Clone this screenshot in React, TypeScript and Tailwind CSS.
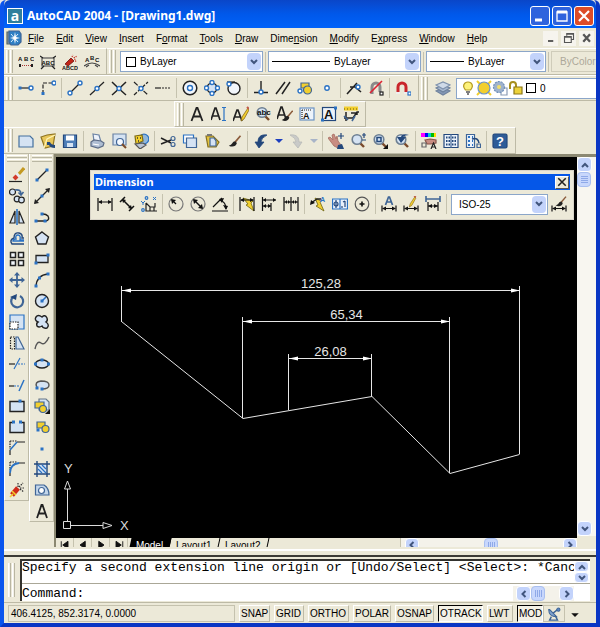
import { useState } from 'react';
import type { ReactNode } from 'react';
import clsx from 'clsx';

type Tool = { name: string; art: ReactNode } | 'sep';

const NAVY = '#23487c';
const STEEL = '#3f6596';
const BLUE = '#2a72c4';
const PALE = '#d5e3f3';
const YELLOW = '#f2cf2e';

function Icon({ children, className = 'h-4 w-4' }: { children: ReactNode; className?: string }) {
  return (
    <svg viewBox="0 0 16 16" className={clsx('shrink-0', className)} fill="none" stroke="#222" strokeWidth="1.2" aria-hidden="true">
      {children}
    </svg>
  );
}

// blue grip point used by most of the draw and snap icons
const Dot = ({ x, y }: { x: number; y: number }) => (
  <rect x={x - 1.5} y={y - 1.5} width="3" height="3" fill={BLUE} stroke="none" />
);
const Ring = ({ x, y, r = 2 }: { x: number; y: number; r?: number }) => (
  <circle cx={x} cy={y} r={r} fill="#fff" stroke={BLUE} strokeWidth="1.4" />
);
const Letters = ({ t, x, y, size, fill = '#111' }: { t: string; x: number; y: number; size: number; fill?: string }) => (
  <text x={x} y={y} fontSize={size} fontFamily="Liberation Sans, sans-serif" fontWeight="bold" fill={fill} stroke="none">{t}</text>
);
const Pencil = () => (
  <g>
    <path d="M15 2 9 11l-1 4 3-2 5-9z" fill={YELLOW} stroke="#8a6a17" strokeWidth=".8" />
    <path d="m14 1 2 2" stroke="#c05a4a" strokeWidth="2" />
  </g>
);
const Brush = () => (
  <g>
    <path d="m15 2-6 7" stroke="#8a5a3a" strokeWidth="1.8" />
    <path d="M9 8c-3 0-3 4-7 5 4 2 8 1 9-3z" fill="#222" stroke="none" />
  </g>
);
const DimBar = ({ y = 13 }: { y?: number }) => (
  <g stroke="#111">
    <path d={`M1 ${y - 3}v6M15 ${y - 3}v6M2 ${y}h12`} />
    <path d={`M1 ${y}l4-2v4zM15 ${y}l-4-2v4z`} fill="#111" stroke="none" />
  </g>
);
const Lens = ({ children }: { children?: ReactNode }) => (
  <g>
    <path d="m10 10 4 4" stroke="#7a4a2a" strokeWidth="2.4" />
    <circle cx="7" cy="6.500" r="4.800" fill={PALE} stroke="#6d7f92" strokeWidth="1.6" />
    {children}
  </g>
);

const express: Tool[] = [
  { name: 'Arc aligned text', art: <><Letters t="A" x={0} y={7} size={6} /><Letters t="B" x={6} y={7} size={6} /><Letters t="C" x={12} y={7} size={6} /><path d="M2 11.500h12" stroke="#a33" strokeDasharray="1 1" /><path d="M1 11.500h2m10 0h2" strokeWidth="3" /></> },
  { name: 'Text fit', art: <><rect x="2" y="4" width="12" height="8" stroke="#555" /><path d="m0 2 3 2m13-2-3 2M1 15l3-3m11 3-3-3" /><Letters t="ABC" x={1.5} y={10.5} size={6} /></> },
  { name: 'Explode text', art: <><path d="m3 10 6-6 3 3-6 5z" fill="#c22518" stroke="#6a1010" strokeWidth=".8" /><path d="m10 3 1-2m1 3 3-2m-2 5h2m-3-4 2 5" stroke="#c22518" strokeDasharray="1 1" /><Letters t="ABCD" x={0} y={16} size={5.5} /></> },
  { name: 'Remote text', art: <><Letters t="A" x={1} y={8} size={6} /><Letters t="B" x={6} y={6} size={6} /><Letters t="C" x={11} y={8} size={6} /><path d="M0 12q8-6 16 0M2 13l3-2m9 2-3-2" stroke="#444" /></> },
];

const snaps: Tool[] = [
  { name: 'Temporary track point', art: <><path d="M2 8h10" /><Dot x={2} y={8} /><Ring x={13} y={8} /></> },
  { name: 'Snap from', art: <><path d="M3 14V3h9" strokeDasharray="4 1.5" /><Dot x={3} y={13.5} /><Ring x={14} y={3} /></> },
  'sep',
  { name: 'Snap to endpoint', art: <><path d="M3 13 13 3" /><Ring x={3} y={13} /><Ring x={13} y={3} /></> },
  { name: 'Snap to midpoint', art: <><path d="M1 15 15 2" /><Ring x={8} y={8.5} /></> },
  { name: 'Snap to intersection', art: <><path d="M1 2q7 7 14 13M1 15Q8 9 15 2" strokeWidth="1.5" /><Ring x={8} y={8.5} /></> },
  { name: 'Snap to apparent intersection', art: <><path d="m1 2 14 13" strokeDasharray="5 1.5" /><path d="M1 15 15 2" strokeDasharray="4 1.5" /><Ring x={8} y={8.5} /></> },
  { name: 'Snap to extension', art: <><path d="M0 8h6" /><path d="M7 8h9" strokeDasharray="2 1" /></> },
  'sep',
  { name: 'Snap to center', art: <><circle cx="8" cy="8" r="6.800" fill="#f2f6fb" strokeWidth="1.5" /><Ring x={8} y={8} r={2.5} /></> },
  { name: 'Snap to quadrant', art: <><circle cx="8" cy="8" r="5" fill={PALE} /><Ring x={8} y={2.5} /><Ring x={13.5} y={8} /><Ring x={8} y={13.5} /><Ring x={2.5} y={8} /></> },
  { name: 'Snap to tangent', art: <><path d="M1 2h8" /><circle cx="8" cy="8.500" r="6" fill="#f2f6fb" strokeWidth="1.4" /><Ring x={3} y={4} /></> },
  'sep',
  { name: 'Snap to perpendicular', art: <><path d="M8 1v11M1 12.500h14" strokeWidth="1.4" /><Ring x={8} y={12} /></> },
  { name: 'Snap to parallel', art: <path d="M1 14 10 2M7 14l8-12" strokeWidth="1.5" /> },
  { name: 'Snap to insert', art: <><path d="M4 3h8v5H4z" fill={YELLOW} stroke={STEEL} /><circle cx="10.500" cy="10" r="4" fill={YELLOW} stroke={STEEL} /><Ring x={3} y={11} /></> },
  { name: 'Snap to node', art: <Ring x={8} y={8} r={2.2} /> },
  'sep',
  { name: 'Snap to nearest', art: <><path d="M1 14 11 3M4 7h5l6 5" strokeWidth="1.6" /><Ring x={12} y={7} /></> },
  { name: 'Snap to none', art: <><path d="M4 14V7a4 4 0 0 1 8 0v5" stroke="#8a8a8a" strokeWidth="3" /><path d="M2 13 14 1" stroke="#d23" strokeWidth="1.6" /><rect x="12" y="12" width="3" height="3" fill="#fff" /></> },
  'sep',
  { name: 'Object snap settings', art: <><path d="M3 14V7a4 4 0 0 1 8 0v7" stroke="#c9252b" strokeWidth="3" /><path d="M1 13h4m4 0h4" stroke="#eee" strokeWidth="2" /><rect x="13" y="12" width="3" height="3" fill="#fff" stroke={BLUE} /></> },
];

const textTools: Tool[] = [
  { name: 'Multiline text', art: <path d="m2.500 15 5-13h1l5 13M4.500 10.500h7" strokeWidth="1.8" /> },
  { name: 'Single line text', art: <><path d="m0 14 4-12h1l4 12M2 10h5.500" strokeWidth="1.700" /><path d="M13 2v12M11 1.500h4M11 14.500h4" stroke={BLUE} /></> },
  { name: 'Edit text', art: <><path d="m0 15 4-11h1l4 11M2 11h5.500" strokeWidth="1.700" /><Pencil /></> },
  { name: 'Find and replace', art: <><Lens /><Letters t="abc" x={2} y={9} size={8} /></> },
  { name: 'Text style', art: <><path d="m0 13 4-12h1l4 12M2 9h5.500" strokeWidth="1.700" /><g transform="translate(3 3) scale(.85)"><Brush /></g></> },
  { name: 'Scale text', art: <><rect x="1" y="2" width="14" height="12" fill="#edf3fa" stroke="#6b93c4" /><path d="M3 4h9M3 4v9" stroke="#222" strokeDasharray="1 1" /><Letters t="A" x={4} y={13} size={9} /></> },
  { name: 'Justify text', art: <><rect x="1.500" y="1.500" width="13" height="13" fill="#edf3fa" stroke={NAVY} /><Letters t="A" x={3} y={13} size={13} /><Dot x={1.5} y={14} /><Dot x={14.5} y={2} /></> },
  { name: 'Convert distance', art: <><path d="M1 2.500h14" stroke={YELLOW} strokeWidth="4" /><path d="M1 3h14" stroke="#6a5a10" strokeDasharray="1 2" /><path d="M3 6v9M1 12h9l4-6h2M8 7h6v2" strokeWidth="1.500" /><path d="m1 10 4 4M9 15l3-5" stroke={STEEL} strokeWidth="1.600" /></> },
];

const standard: Tool[] = [
  { name: 'New', art: <path d="M1 3h11l3 3v8H1z" fill={PALE} stroke="#44709e" /> },
  { name: 'Open', art: <><path d="m1 4 6-2 8-1-2 12-8 2z" fill="#e7c65a" stroke="#8f7420" /><path d="m4 15 3-9 8-4" stroke="#fff3b5" /><path d="M7 9h3q1 3 5 3v3q-5 0-6-3H7z" fill={NAVY} stroke="none" /></> },
  { name: 'Save', art: <><path d="M1.500 2h13v12.500h-13z" fill="#4f7fb8" stroke={NAVY} /><path d="M4 2.500h8v5H4z" fill="#fff" stroke="none" /><path d="M5 10h6v4H5z" fill={PALE} stroke="none" /></> },
  'sep',
  { name: 'Plot', art: <><path d="m4 1 6 1 2 7-7-1z" fill="#eef3fb" stroke="#6b83a4" /><path d="m2 9 3-2 7 1 3 2-1 3-5 2-7-2z" fill="#aebdd2" stroke="#5c6c86" /><path d="m4 11 6 1" stroke="#fff" /></> },
  { name: 'Plot preview', art: <><path d="M2 1h13v11H2z" fill={PALE} stroke="#6b83a4" /><circle cx="9" cy="9" r="3.500" fill="#f5f9ff" stroke={STEEL} /><path d="m11 11 4 4" stroke="#7a4a2a" strokeWidth="2" /></> },
  { name: 'Publish', art: <><circle cx="11" cy="6" r="4.800" fill="#8fb7dc" stroke={BLUE} /><path d="m2 3 7-1 1 6-7 3z" fill={YELLOW} stroke="#7d6a14" /><path d="M4 5h1m2 0h1M5 8h1" stroke="#333" strokeWidth="1.500" /><path d="m2 11 8-1 3 2-6 4z" fill="#b9c4d4" stroke="#555" /></> },
  'sep',
  { name: 'Cut', art: <><path d="m1 5 10 5M1 11l10-4" strokeWidth="1.500" /><circle cx="13" cy="5.500" r="2" stroke={STEEL} /><circle cx="13" cy="11.500" r="2" stroke={STEEL} /></> },
  { name: 'Copy', art: <><path d="M1.500 2h10v8h-10z" fill="#fff" stroke={BLUE} /><path d="M4.500 5h10v9.500h-10z" fill={PALE} stroke={STEEL} /></> },
  { name: 'Paste', art: <><path d="M2 3h7l6 6-3 5H4z" fill="#e5c33d" stroke="#857021" /><path d="M6 5h4l2 3v5H6z" fill={PALE} stroke={STEEL} /><path d="M3 2h5" stroke="#777" strokeWidth="2" /></> },
  { name: 'Match properties', art: <g transform="translate(1 1) scale(.9)"><Brush /></g> },
  'sep',
  { name: 'Undo', art: <path d="M14 2C7 1 5 5 5 9H2l4 6 5-6H8q0-4 6-7z" fill={NAVY} stroke={NAVY} strokeWidth=".8" /> },
  { name: 'Undo list', art: <path d="M4 6h8l-4 4z" fill="#1d3fbf" stroke="none" /> },
  { name: 'Redo', art: <path d="M2 2c7-1 9 3 9 7h3l-4 6-5-6h3Q8 5 2 2z" fill="#c9cac8" stroke="#b8b9b6" strokeWidth=".8" /> },
  { name: 'Redo list', art: <path d="M4 6h8l-4 4z" fill="#a8b4c8" stroke="none" /> },
  'sep',
  { name: 'Pan', art: <><path d="m0 5 2-1 3 3-1-5 2-1 2 5 1-3 1 5 3 4-3 3-4-2z" fill="#c98d82" stroke="#a56c60" strokeWidth=".8" /><path d="m10 12 4-1 2 5H9z" fill={NAVY} stroke="none" /><path d="M13 0v6m-3-3h6" stroke={NAVY} /></> },
  { name: 'Zoom realtime', art: <><Lens /><path d="M14 0v5m-2-3h4m-4 5h4" stroke={NAVY} /></> },
  { name: 'Zoom window', art: <><Lens><path d="M5 4.500h4v4H5z" stroke={NAVY} strokeWidth="1.500" /></Lens><path d="M16 11v5h-5z" fill="#111" stroke="none" /></> },
  { name: 'Zoom previous', art: <><Lens /><path d="M15 2Q8 0 7 4H3l4 6 5-6H9q2-2 6-2z" fill={NAVY} stroke="none" /></> },
  'sep',
  { name: 'Properties', art: <><path d="M0 2h4" stroke="#f0f" strokeWidth="4" /><path d="M4 2h3" stroke="#00f" strokeWidth="4" /><path d="M7 2h3" stroke="#0cc" strokeWidth="4" /><path d="M10 2h3" stroke="#0b0" strokeWidth="4" /><path d="M13 2h2" stroke="#fd0" strokeWidth="4" /><path d="m4 7 5-1 6 1v3l-5 1H6z" fill="#c98d82" stroke="#875349" /><path d="m10 16 2.500-6 2.500 6M11 14h3" /><path d="M1 10h4v4H1z" stroke="#666" /></> },
  { name: 'DesignCenter', art: <><path d="M1 1.500h14v13H1z" fill="#edf3fa" stroke={NAVY} /><path d="M8 1v14" stroke={STEEL} /><path d="M3 4.500h4m2 0h4M3 8h4m2 0h4M3 11.500h4m2 0h4" stroke={NAVY} strokeWidth="2" strokeDasharray="1.500 1" /></> },
  { name: 'Tool palettes', art: <><path d="M1.500 1.500h8v13h-8z" fill="#edf3fa" stroke={STEEL} /><path d="M3 4h2m2 0h1M3 8h2m2 0h1m-5 4h2m2 0h1" stroke={BLUE} strokeWidth="2" /><path d="M7 6q6-2 7 4" stroke={NAVY} strokeWidth="1.500" /><path d="M12 11h3.500v3.500H12z" stroke={STEEL} /></> },
  'sep',
  { name: 'Help', art: <><rect x="1" y="1" width="14" height="14" rx="1.500" fill="#2e5c98" stroke={NAVY} /><Letters t="?" x={4} y={13} size={13} fill="#fff" /></> },
];

const modify: Tool[] = [
  { name: 'Erase', art: <><path d="M0 14.500h13" /><path d="m15 1-6 7" stroke="#c49a22" strokeWidth="3" /><path d="m10 7-2 2" stroke="#e8ecf2" strokeWidth="4" /><path d="m8 9-3 3" stroke="#d23a2a" strokeWidth="4" /></> },
  { name: 'Copy object', art: <><circle cx="3.500" cy="4" r="3" fill={PALE} /><circle cx="8" cy="11" r="2.800" fill={PALE} /><circle cx="12.500" cy="12" r="2.800" fill={PALE} /><path d="M6 2q6-1 6 4m-2.500-1.500L12 7l2.500-3" stroke={STEEL} strokeWidth="1.600" /></> },
  { name: 'Mirror', art: <><path d="M6 2v12H1zM10 2v12h5z" fill={PALE} /><path d="M8 0v16" stroke={BLUE} strokeWidth="1.600" /></> },
  { name: 'Offset', art: <><path d="M15 14H3q-3-4 2-6 0-6 5-5 4 1 3 5h2" stroke={NAVY} strokeWidth="1.400" /><path d="M15 11H4q0-2 3-2-1-4 2-4t2 5h4" stroke={BLUE} strokeWidth="1.400" /></> },
  { name: 'Array', art: <path d="M1.500 1.500h5v5h-5zm8 0h5v5h-5zm-8 8h5v5h-5zm8 0h5v5h-5z" fill="#f2f6fb" strokeWidth="1.500" /> },
  { name: 'Move', art: <><path d="M8 1v14M1 8h14" stroke={STEEL} strokeWidth="1.800" /><path d="m8 0 3 3.500H5zm0 16 3-3.500H5zM0 8l3.500-3v6zm16 0-3.500-3v6z" fill={STEEL} stroke="none" /></> },
  { name: 'Rotate', art: <><path d="M4 4a6 6 0 1 0 7-1" stroke={STEEL} strokeWidth="2.200" /><path d="m1 4 7-3-1 6z" fill={NAVY} stroke="none" /></> },
  { name: 'Scale', art: <><path d="M1 1h14v14H1z" fill={PALE} stroke={BLUE} /><path d="M1 8h8v7H1z" fill="#fff" strokeDasharray="1.500 1" /></> },
  { name: 'Stretch', art: <><path d="M1.500 2h4v12h-4z" strokeDasharray="1.500 1" /><path d="M7 2h2l6 12H7z" fill={PALE} stroke={STEEL} /></> },
  { name: 'Trim', art: <><path d="M0 8h6" /><path d="m5 13 6-11" stroke={BLUE} /><path d="M9 8h7" stroke={BLUE} strokeDasharray="2 1" /></> },
  { name: 'Extend', art: <><path d="M0 9h5" /><path d="M5 9h6" stroke={BLUE} strokeDasharray="2 1" /><path d="m10 14 5-11" stroke={BLUE} strokeWidth="1.500" /></> },
  { name: 'Break at point', art: <><path d="M1 3.500h14v10H1z" fill={PALE} strokeWidth="1.400" /><Dot x={11} y={3} /></> },
  { name: 'Break', art: <><path d="M4 3.500H1v10h14v-10h-3" fill={PALE} strokeWidth="1.400" /><Dot x={4.5} y={3} /><Dot x={11.5} y={3} /></> },
  { name: 'Chamfer', art: <><path d="M1 1h7M1 1v8" strokeDasharray="1.500 1" /><path d="M1 15v-5m7-8h8" /><path d="m1 10 7-8" stroke={BLUE} strokeWidth="1.500" /></> },
  { name: 'Fillet', art: <><path d="M1 1h7M1 1v8" strokeDasharray="1.500 1" /><path d="M1 15v-3m9-10h6" /><path d="M1 12q0-9 9-10" stroke={BLUE} strokeWidth="1.800" /></> },
  { name: 'Explode', art: <><path d="m3 13 6-7" stroke="#cf2a1b" strokeWidth="5" /><path d="m3 9 4 4M1 15l3-3" stroke={YELLOW} strokeWidth="1.600" /><path d="M9 5V1m1 4 4-4m-3 5h4m-4 1 4 3" stroke="#333" strokeDasharray="1.500 1" /></> },
];

const draw: Tool[] = [
  { name: 'Line', art: <><path d="M3 13 13 3" /><Dot x={3} y={13} /><Dot x={13} y={3} /></> },
  { name: 'Construction line', art: <><path d="M1 15 15 1" /><path d="m0 16 1-5 4 4zM16 0l-1 5-4-4z" fill="#222" stroke="none" /><Dot x={8} y={8} /></> },
  { name: 'Polyline', art: <><path d="M2 12h10q4-1 2-5-2-2-5-2" strokeWidth="1.400" /><Dot x={2} y={12} /><Dot x={11} y={12} /><Dot x={8} y={5} /></> },
  { name: 'Polygon', art: <path d="m8 2 6.500 5-2.500 7H4L1.500 7z" fill={PALE} strokeWidth="1.400" /> },
  { name: 'Rectangle', art: <><path d="M2 4.500h12v7H2z" fill={PALE} strokeWidth="1.300" /><Dot x={2} y={12} /><Dot x={14} y={4} /></> },
  { name: 'Arc', art: <><path d="M2 14Q3 3 14 2" strokeWidth="1.300" /><Dot x={2} y={14} /><Dot x={5.5} y={6} /><Dot x={14} y={2} /></> },
  { name: 'Circle', art: <><circle cx="8" cy="8" r="6.500" fill={PALE} strokeWidth="1.400" /><path d="m8 8 4-4" stroke={BLUE} strokeWidth="1.600" /><Dot x={8} y={8} /></> },
  { name: 'Revision cloud', art: <path d="M4 8Q0 6 2 3t6 0q3-3 5 1 1 3-1 4 4 3 1 6-4 1-5-2-3 2-5 0-1-3 1-4z" fill={PALE} strokeWidth="1.400" /> },
  { name: 'Spline', art: <path d="M1 14q2-9 6-6t8-6" stroke="#555" strokeWidth="1.400" /> },
  { name: 'Ellipse', art: <><ellipse cx="8" cy="8" rx="6.500" ry="4" fill={PALE} strokeWidth="1.400" /><Dot x={8} y={4} /><Dot x={1.5} y={8} /><Dot x={14.5} y={8} /></> },
  { name: 'Ellipse arc', art: <><path d="M3 10Q0 5 7 4q8 0 8 4t-7 4" fill={PALE} stroke="#555" strokeWidth="1.400" /><Dot x={3} y={11} /><Dot x={8} y={12} /></> },
  { name: 'Insert block', art: <><path d="M5 1h7l3 3v8H5z" fill={PALE} stroke="#678" /><path d="M1 4h9v6H1z" fill={YELLOW} stroke={STEEL} /><circle cx="9" cy="11" r="3.500" fill={YELLOW} stroke={STEEL} /><path d="M16 11v5h-5z" fill="#111" stroke="none" /></> },
  { name: 'Make block', art: <><path d="M3 3h8v6H3z" fill={YELLOW} stroke={STEEL} /><circle cx="11.500" cy="10" r="3.500" fill={YELLOW} stroke={STEEL} /><Dot x={4} y={11} /></> },
  { name: 'Point', art: <Dot x={8} y={9} /> },
  { name: 'Hatch', art: <><path d="M3 3h10v10H3z" fill={PALE} stroke="none" /><path d="M3 0v16M13 0v16M0 3h16M0 13h16" stroke={NAVY} strokeWidth="1.400" /><path d="m4 4 8 8M8 4l4 4M4 8l4 4" stroke={BLUE} /></> },
  { name: 'Region', art: <><path d="M1.500 3H10q5 3 5 10H1.500z" fill="#c3d6ea" stroke={STEEL} /><circle cx="7.500" cy="8.500" r="3" fill="#fff" stroke={STEEL} /></> },
  { name: 'Text', art: <path d="m3 15 4.500-13h1L13 15M4.500 10.500h7" strokeWidth="1.800" /> },
];

const dims: Tool[] = [
  { name: 'Linear dimension', art: <><path d="M1 2v13M15 2v13M2 6h12" stroke="#111" /><path d="m1 6 4-2v4zM15 6l-4-2v4z" fill="#111" stroke="none" /></> },
  { name: 'Aligned dimension', art: <><path d="M1 6 6 1m4 14 5-5M3.500 3.500l9 9" stroke="#111" strokeWidth="1.500" /><path d="m3 3 4 1-3 3zm10 10-4-1 3-3z" fill="#111" stroke="none" /></> },
  { name: 'Ordinate dimension', art: <><path d="M5 7v8h11M5 7l4 4h5V7M9 11v4M13 11v4" /><circle cx="5.500" cy="2" r="1.300" stroke={BLUE} /><circle cx="2" cy="14" r="1.300" stroke={BLUE} /><path d="m12 1 3 3m0-3-3 3M0 5l2 2 2-2M2 7v2" stroke={BLUE} strokeWidth="1" /></> },
  'sep',
  { name: 'Radius dimension', art: <><circle cx="8" cy="8" r="7" stroke="#777" /><path d="m8 8-4-4" stroke="#111" /><path d="m3 3 5 1-4 4z" fill="#111" stroke="none" /></> },
  { name: 'Diameter dimension', art: <><circle cx="8" cy="8" r="7" stroke="#777" /><path d="m4 4 8 8" stroke="#111" strokeWidth="1.500" /><path d="m3 3 5 1-4 4zm10 10-5-1 4-4z" fill="#111" stroke="none" /></> },
  { name: 'Angular dimension', art: <><path d="M0 15h16M1 11 10 2M8 4q6 2 6 9" stroke="#111" /><path d="m7 3 5-1-2 5zm7 11-3-5 5 1z" fill="#111" stroke="none" /></> },
  'sep',
  { name: 'Quick dimension', art: <><path d="m4 2 10 3-2 2 3 8-8-6 2-1z" fill={YELLOW} stroke="#6d6410" strokeWidth=".8" /><path d="M1 1v14M15 1v14M2 4h12" stroke="#111" /><path d="m1 4 4-2v4zm14 0-4-2v4z" fill="#111" stroke="none" /></> },
  { name: 'Baseline dimension', art: <><path d="M1.500 1v14M2 4h13M2 10h8M10 7v8" stroke="#111" /><path d="m2 4 3-2v4zm13 0-3-2v4zM2 10l3-2v4zm8 0L7 8v4z" fill="#111" stroke="none" /></> },
  { name: 'Continue dimension', art: <><path d="M1 1v14M8 1v14M15 1v14M1 6h14" stroke="#111" /><path d="m2 6 2-2v4zm5 0L5 4v4zm2 0 2-2v4zm5 0-2-2v4z" fill="#111" stroke="none" /></> },
  'sep',
  { name: 'Quick leader', art: <><path d="m5 2 6 3-1 1 4 9-8-5 2-1z" fill={YELLOW} stroke="#6d6410" strokeWidth=".8" /><path d="m1 7 6-4h4" strokeWidth="1.400" /><path d="m0 9 1-5 4 3z" fill="#111" stroke="none" /><Letters t="A" x={10} y={6} size={7} fill={BLUE} /></> },
  { name: 'Tolerance', art: <><path d="M.5 3h15v10H.5z" fill="#e8f0fa" stroke={BLUE} /><path d="M8 3v10" stroke={BLUE} /><circle cx="4" cy="8" r="2" stroke={NAVY} /><path d="M4 4v8m6-2v2m3-7v6m-2-5 2-1" stroke={NAVY} /></> },
  { name: 'Center mark', art: <><circle cx="8" cy="8" r="6.800" stroke="#555" /><path d="M8 5.500v5M5.500 8h5" stroke="#111" strokeWidth="1.600" /></> },
  'sep',
  { name: 'Dimension edit', art: <><DimBar y={12.5} /><path d="M4.500 9 7.500 1h1l3 8M6 6h4" stroke={STEEL} strokeWidth="1.700" /></> },
  { name: 'Dimension text edit', art: <><DimBar y={12.5} /><g transform="translate(0 -1) scale(.8)"><Pencil /></g></> },
  { name: 'Dimension update', art: <><path d="M1 3h14M1 0v6M15 0v6" stroke={STEEL} strokeWidth="1.600" /><path d="M3 6v9M13 6v9M3 10h10" stroke="#111" /><path d="m3 10 4-2v4zm10 0L9 8v4z" fill="#111" stroke="none" /></> },
  'sep',
];

function Sep() {
  return <span className="mx-0.5 h-5 w-px shrink-0 bg-[#c5c2ae]" />;
}

function ToolButton({ name, art, size }: { name: string; art: ReactNode; size: string }) {
  return (
    <button type="button" title={name} aria-label={name} className={clsx('flex shrink-0 items-center justify-center hover:bg-[#c1d2ee]', size)}>
      <Icon>{art}</Icon>
    </button>
  );
}

function Tools({ items, size = 'h-[22px] w-[22px]' }: { items: Tool[]; size?: string }) {
  return (
    <>
      {items.map((t, i) =>
        t === 'sep'
          ? <Sep key={i} />
          : <ToolButton key={t.name} name={t.name} art={t.art} size={t.name.endsWith(' list') ? 'h-[22px] w-[13px]' : size} />
      )}
    </>
  );
}

function Grip() {
  return (
    <span className="flex h-[23px] w-[11px] shrink-0 gap-px pl-0.5">
      <span className="w-[3px] border-r border-l border-l-white border-r-[#b9b6a2]" />
      <span className="w-[3px] border-r border-l border-l-white border-r-[#b9b6a2]" />
    </span>
  );
}

function Bar({ children, className }: { children: ReactNode; className?: string }) {
  return (
    <div className={clsx('flex items-center border-t border-b border-t-white border-b-[#bdbaa6]', className)}>
      <Grip />
      {children}
    </div>
  );
}

function Chevron({ dir, className = 'h-[10px] w-[10px]' }: { dir: 'up' | 'down' | 'left' | 'right'; className?: string }) {
  const paths = { up: 'M2 7l3-3 3 3', down: 'M2 3l3 3 3-3', left: 'M6.500 2l-3 3 3 3', right: 'M3.500 2l3 3-3 3' };
  return (
    <svg viewBox="0 0 10 10" className={className} fill="none" stroke="#41557d" strokeWidth="2" aria-hidden="true">
      <path d={paths[dir]} />
    </svg>
  );
}

function Combo({ label, options, lead, className }: { label: string; options: string[]; lead?: ReactNode; className?: string }) {
  return (
    <label className={clsx('relative flex h-[21px] shrink-0 items-center border border-[#8ba6c9] bg-white pl-[3px]', className)}>
      {lead}
      <select aria-label={label} className="h-full min-w-0 flex-1 appearance-none bg-transparent pl-1 outline-none">
        {options.map(o => <option key={o}>{o}</option>)}
      </select>
      <span className="pointer-events-none absolute inset-y-px right-px flex w-[14px] items-center justify-center rounded-sm bg-[#c3d3fb]">
        <Chevron dir="down" />
      </span>
    </label>
  );
}

const Swatch = () => <span className="ml-0.5 h-[10px] w-[10px] shrink-0 border border-black bg-white" />;

function ScrollButton({ dir, name, className = 'h-[14px] w-[14px]' }: { dir: 'up' | 'down' | 'left' | 'right'; name: string; className?: string }) {
  return (
    <button type="button" aria-label={name} className={clsx('flex shrink-0 items-center justify-center overflow-hidden rounded-sm border border-white bg-[#c3d3fb]', className)}>
      <Chevron dir={dir} />
    </button>
  );
}

function Thumb({ vertical }: { vertical?: boolean }) {
  return (
    <span className={clsx('flex h-[15px] w-[14px] shrink-0 items-center justify-center gap-px rounded-sm border border-[#a9bff0] bg-[#c8d7fc]', vertical && 'flex-col')}>
      {[0, 1, 2, 3].map(i => (
        <span key={i} className={clsx('bg-[#8fa9e8]', vertical ? 'h-px w-[7px]' : 'h-[7px] w-px')} />
      ))}
    </span>
  );
}

function TitleBar() {
  const button = 'flex h-5 w-5 items-center justify-center rounded-[3px] border border-white';
  return (
    <header className="flex h-7 items-center gap-1 rounded-t-md bg-linear-to-b from-[#0a46c8] via-[#0058ea] to-[#0062fa] pt-1 pr-0.5 pl-[3px]">
      <span className="flex h-4 w-4 items-center justify-center border border-white bg-[#2f7f9c] font-['Noto_Sans',sans-serif] text-[14px] leading-none font-bold text-white">a</span>
      <h1 className="flex-1 truncate font-['Noto_Sans',sans-serif] text-[12px] leading-5 font-bold text-white">AutoCAD 2004 - [Drawing1.dwg]</h1>
      <div className="flex gap-0.5">
        <button type="button" aria-label="Minimize" className={clsx(button, 'bg-[#2f63dd]')}>
          <Icon><path d="M3 12h7" stroke="#fff" strokeWidth="3" /></Icon>
        </button>
        <button type="button" aria-label="Maximize" className={clsx(button, 'bg-[#2f63dd]')}>
          <Icon><path d="M3 4h10v9H3z" stroke="#fff" strokeWidth="1.300" /><path d="M3 4h10" stroke="#fff" strokeWidth="3" /></Icon>
        </button>
        <button type="button" aria-label="Close" className={clsx(button, 'bg-[#dd4c28]')}>
          <Icon><path d="m3 3 10 10M13 3 3 13" stroke="#fff" strokeWidth="2.200" /></Icon>
        </button>
      </div>
    </header>
  );
}

// [text before the access key, access key, rest]
const menus = [
  ['', 'F', 'ile'], ['', 'E', 'dit'], ['', 'V', 'iew'], ['', 'I', 'nsert'], ['F', 'o', 'rmat'], ['', 'T', 'ools'],
  ['', 'D', 'raw'], ['Dime', 'n', 'sion'], ['', 'M', 'odify'], ['E', 'x', 'press'], ['', 'W', 'indow'], ['', 'H', 'elp'],
];

function MenuBar() {
  const mdi = 'flex h-[15px] w-[15px] items-center justify-center bg-[#f6f4ee]';
  return (
    <nav className="flex h-5 items-center pr-0.5 pl-[2px]">
      <Icon className="h-4 w-4">
        <path d="M1 2h3v12H1z" fill="#8a97a8" stroke="#566" />
        <path d="M3 1h10l2 3v8l-3 3H5l-2-3z" fill="#2f7fc4" stroke={STEEL} />
        <path d="M5 4l7 8M12 4l-7 8" stroke="#d8eefc" strokeWidth="1" />
        <path d="m9 2 1 5 4 1-4 1-1 5-1-5-4-1 4-1z" fill="#fff" stroke="none" />
      </Icon>
      <div className="flex flex-1 pt-px">
        {menus.map(([a, key, b]) => (
          <button key={a + key + b} type="button" className="px-[6px] hover:bg-[#316ac5] hover:text-white">
            {a}<u>{key}</u>{b}
          </button>
        ))}
      </div>
      <div className="flex gap-[3px]">
        <button type="button" aria-label="Minimize drawing" className={mdi}><Icon className="h-3 w-3"><path d="M4 12h7" stroke="#555" strokeWidth="2.500" /></Icon></button>
        <button type="button" aria-label="Restore drawing" className={mdi}><Icon className="h-3 w-3"><path d="M5 5V2h9v8h-3M2 6h9v8H2zM2 7h9M5 3h9" stroke="#555" strokeWidth="1.500" /></Icon></button>
        <button type="button" aria-label="Close drawing" className={mdi}><Icon className="h-3 w-3"><path d="m3 3 9 10M12 3 3 13" stroke="#555" strokeWidth="3" /></Icon></button>
      </div>
    </nav>
  );
}

const LineSample = ({ className }: { className: string }) => <span className={clsx('h-px shrink-0 bg-black', className)} />;

function TopToolbars() {
  return (
    <div className="flex flex-col overflow-hidden">
      <div className="flex h-[27px]">
        <Bar className="shrink-0 border-r border-r-[#bdbaa6] pr-[3px]"><Tools items={express} /></Bar>
        <Bar className="min-w-0 flex-1 overflow-hidden">
          <div className="flex min-w-0 flex-1 items-center pl-0.5">
            <Combo label="Color" options={['ByLayer']} lead={<Swatch />} className="w-[143px]" />
            <Sep />
            <Combo label="Linetype" options={['ByLayer']} lead={<LineSample className="w-[58px]" />} className="w-[153px]" />
            <Sep />
            <Combo label="Lineweight" options={['ByLayer']} lead={<LineSample className="w-[34px]" />} className="w-[120px]" />
            <Sep />
            <select aria-label="Plot style" disabled className="h-[21px] min-w-0 flex-1 appearance-none border border-r-0 border-[#cfccba] pl-2 text-[#aca899]">
              <option>ByColor</option>
            </select>
          </div>
        </Bar>
      </div>
      <div className="flex h-[26px]">
        <Bar className="shrink-0 border-r border-r-[#bdbaa6] pr-1"><Tools items={snaps} /></Bar>
        <Bar className="min-w-0 flex-1 overflow-hidden">
          <ToolButton
            name="Layer properties"
            size="h-[22px] w-[26px]"
            art={<><path d="m1 11 7-3 7 3-7 4z" fill="#8498b6" stroke="#6f829d" /><path d="m1 8 7-3 7 3-7 4z" fill="#a9bad1" stroke="#6f829d" /><path d="m1 5 7-3 7 3-7 4z" fill="#cfdae8" stroke="#7f92ad" /></>}
          />
          <label className="flex h-[21px] min-w-0 flex-1 items-center border border-r-0 border-[#8ba6c9] bg-white pl-[3px]">
            <Icon><path d="M5.500 10Q2 6 5 3q3-2 6 0 3 3-.5 7z" fill="#fdf27a" stroke="#b59b22" /><path d="M6 12h4m-3 2h2" stroke="#555" strokeWidth="1.600" /></Icon>
            <Icon><path d="m1 1 14 14M15 1 1 15" stroke={YELLOW} strokeWidth="2" /><circle cx="8" cy="8" r="6" fill={YELLOW} stroke="#6d93c6" /></Icon>
            <Icon><path d="M9 8h6v7H9z" fill="#fff" stroke="#8b9bb4" /><circle cx="7" cy="7" r="5.500" fill="#9fb2cc" stroke="#6f8fba" strokeDasharray="2 1" /><circle cx="7" cy="7" r="2" fill="#f2df6a" stroke="none" /></Icon>
            <Icon><path d="M2 9V5q0-3 3-3t3 3v2" stroke="#a78f1e" strokeWidth="2" /><path d="M6 7h8v7H6z" fill="#ecd23a" stroke="#8b7718" /></Icon>
            <Swatch />
            <select aria-label="Layer" className="min-w-0 flex-1 appearance-none bg-transparent pl-1 outline-none"><option>0</option></select>
          </label>
        </Bar>
      </div>
      <div className="flex h-[26px] pl-[170px]">
        <Bar className="border-r border-l border-r-[#bdbaa6] border-l-white pr-[3px]"><Tools items={textTools} /></Bar>
      </div>
      <div className="flex h-[27px]">
        <Bar className="border-r border-r-[#bdbaa6] pr-1"><Tools items={standard} /></Bar>
      </div>
    </div>
  );
}

function SideBar({ items }: { items: Tool[] }) {
  return (
    <div className="flex w-[25px] shrink-0 flex-col items-center self-start border-r border-b border-l border-r-[#bdbaa6] border-b-[#bdbaa6] border-l-white">
      <span className="mt-px mb-0.5 flex w-5 flex-col gap-px">
        <span className="h-[3px] border-t border-b border-t-white border-b-[#b9b6a2]" />
        <span className="h-[3px] border-t border-b border-t-white border-b-[#b9b6a2]" />
      </span>
      <Tools items={items} size="h-[21px] w-[22px]" />
    </div>
  );
}

function DimensionPalette({ onClose }: { onClose: () => void }) {
  return (
    <section aria-label="Dimension" className="absolute top-[13px] right-[3px] left-[34px] border border-[#d8d4c8] bg-[#ece9d8] p-[3px]">
      <div className="flex h-4 items-center justify-between bg-[#0557e8] px-px">
        <h2 className="font-['Noto_Sans',sans-serif] text-[11px] leading-4 font-bold text-white">Dimension</h2>
        <button type="button" aria-label="Close Dimension toolbar" onClick={onClose} className="flex h-[13px] w-[14px] items-center justify-center border border-white border-r-[#555] border-b-[#555] bg-[#ece9d8]">
          <Icon className="h-[10px] w-[10px]"><path d="m2 2 12 12M14 2 2 14" strokeWidth="2.500" /></Icon>
        </button>
      </div>
      <div className="flex h-[26px] items-center pt-0.5">
        <Tools items={dims} />
        <Combo label="Dimension style" options={['ISO-25']} className="ml-0.5 w-[97px]" />
        <ToolButton name="Dimension style manager" size="h-[22px] w-[22px]" art={<><DimBar y={12.5} /><g transform="translate(3 -1) scale(.8)"><Brush /></g></>} />
      </div>
    </section>
  );
}

type DimLine = { x1: number; x2: number; y: number; end1: number; end2: number; text: string };

const dimLines: DimLine[] = [
  { x1: 66, x2: 464, y: 134, end1: 165, end2: 297, text: '125,28' },
  { x1: 187, x2: 394, y: 165, end1: 261, end2: 316, text: '65,34' },
  { x1: 233, x2: 316, y: 202, end1: 253, end2: 239, text: '26,08' },
];

function Drawing() {
  return (
    <svg className="absolute inset-0 h-full w-full" fill="none" stroke="#e6e6e6" strokeWidth="1" aria-label="Drawing1">
      <polyline points="65.500,164.500 187,261.500 316,239.500 394,316.500 463.500,297.500" />
      {dimLines.map(d => (
        <g key={d.text}>
          <path d={`M${d.x1 - 0.5} ${d.y - 5}V${d.end1}M${d.x2 - 0.5} ${d.y - 5}V${d.end2}M${d.x1} ${d.y - 0.5}H${d.x2}`} />
          <path d={`M${d.x1} ${d.y - 0.5}l9-2v4zM${d.x2} ${d.y - 0.5}l-9-2v4z`} fill="#fff" stroke="none" />
          <text x={(d.x1 + d.x2) / 2} y={d.y - 3} textAnchor="middle" fontFamily="Liberation Sans, sans-serif" fontSize="13" fill="#e6e6e6" stroke="none">{d.text}</text>
        </g>
      ))}
    </svg>
  );
}

function UcsIcon() {
  return (
    <svg width="80" height="76" className="absolute bottom-1 left-[3px]" fill="none" stroke="#dcdcdc" aria-label="UCS icon">
      <path d="M4.500 63.500h7v7h-7zM8.500 63V31M12 67.500h32" />
      <path d="m8.500 23 3 8h-6zM53 67.500l-9-3v6z" />
      <text x="5" y="15" fontFamily="Liberation Sans, sans-serif" fontSize="13" fill="#dcdcdc" stroke="none">Y</text>
      <text x="61" y="72" fontFamily="Liberation Sans, sans-serif" fontSize="13" fill="#dcdcdc" stroke="none">X</text>
    </svg>
  );
}

const tabArrows = [
  { name: 'First tab', d: 'M3 3v10M12 3 5 8l7 5z' },
  { name: 'Previous tab', d: 'M11 3 4 8l7 5z' },
  { name: 'Next tab', d: 'm5 3 7 5-7 5z' },
  { name: 'Last tab', d: 'm4 3 7 5-7 5zM13 3v10' },
];

function LayoutTabs() {
  const [tab, setTab] = useState('Model');
  return (
    <div className="flex h-[9px] items-start overflow-hidden bg-[#ece9d8]">
      {tabArrows.map(a => (
        <button key={a.name} type="button" aria-label={a.name} className="flex h-[14px] w-[18px] shrink-0 items-center justify-center border-r border-[#c5c2ae]">
          <Icon className="h-3 w-3"><path d={a.d} fill="#111" stroke="#111" /></Icon>
        </button>
      ))}
      <div className="flex flex-1 pl-0.5">
        {['Model', 'Layout1', 'Layout2'].map(t => (
          <button
            key={t}
            type="button"
            onClick={() => setTab(t)}
            className={clsx('flex h-[14px] -skew-x-12 items-center border-r border-black px-[6px]', t === tab && 'bg-black text-white')}
          >
            <span className="skew-x-12">{t}</span>
          </button>
        ))}
      </div>
      <div className="flex w-[177px] shrink-0 justify-between border-l border-[#c5c2ae] bg-[#f4f2ea] pl-1">
        <ScrollButton dir="left" name="Scroll left" />
        <Thumb />
        <ScrollButton dir="right" name="Scroll right" />
      </div>
    </div>
  );
}

function DrawingArea() {
  const [paletteOpen, setPaletteOpen] = useState(true);
  return (
    <main className="flex min-w-0 flex-1 border-t-[3px] border-l-2 border-[#8b8872]">
      <div className="flex min-w-0 flex-1 flex-col">
        <div className="relative min-h-[370px] flex-1 overflow-hidden bg-black">
          <Drawing />
          <UcsIcon />
          {paletteOpen && <DimensionPalette onClose={() => setPaletteOpen(false)} />}
        </div>
        <LayoutTabs />
      </div>
      <div className="mb-[11px] flex w-[19px] flex-col items-start bg-[#f8f6f0]">
        <ScrollButton dir="up" name="Scroll up" className="h-[15px] w-[15px]" />
        <Thumb vertical />
        <span className="flex-1" />
        <ScrollButton dir="down" name="Scroll down" className="h-[15px] w-[15px]" />
      </div>
    </main>
  );
}

function CommandWindow() {
  return (
    <section aria-label="Command line" className="flex h-[47px] border-t-2 border-[#3c3b36] pt-0.5 pl-1">
      <span className="mt-1 mr-[5px] flex h-[34px] w-[7px] shrink-0 gap-px">
        <span className="flex-1 border-r border-l border-l-white border-r-[#b9b6a2] bg-[#f3f1e8]" />
        <span className="flex-1 border-r border-l border-l-white border-r-[#b9b6a2] bg-[#f3f1e8]" />
      </span>
      <div className="mr-1.5 mb-px flex min-w-0 flex-1 flex-col border-t-2 border-l-2 border-[#33322e] bg-white font-['Liberation_Mono',monospace] text-[13px]">
        <div className="flex h-[24px] border-b border-[#aaa797]">
          <p className="min-w-0 flex-1 overflow-hidden leading-[14px] whitespace-pre">Specify a second extension line origin or [Undo/Select] &lt;Select&gt;: *Cance</p>
          <div className="w-4">
            <ScrollButton dir="up" name="Scroll history up" className="h-[11px] w-[15px]" />
            <ScrollButton dir="down" name="Scroll history down" className="h-[11px] w-[15px]" />
          </div>
        </div>
        <div className="flex flex-1 items-center">
          <label htmlFor="command" className="leading-4">Command:</label>
          <input id="command" className="min-w-0 flex-1 bg-transparent outline-none" />
          <div className="mr-4 flex w-[61px] bg-[#f4f2ea]">
            <ScrollButton dir="left" name="Scroll command left" className="ml-[3px] h-[15px] w-[15px]" />
            <Thumb />
            <span className="flex-1" />
            <ScrollButton dir="right" name="Scroll command right" className="h-[15px] w-[15px]" />
          </div>
        </div>
      </div>
    </section>
  );
}

const modes = [
  { name: 'SNAP', width: 'w-[31px]' },
  { name: 'GRID', width: 'w-[30px]' },
  { name: 'ORTHO', width: 'w-[41px]' },
  { name: 'POLAR', width: 'w-[38px]' },
  { name: 'OSNAP', width: 'w-[39px]' },
  { name: 'OTRACK', width: 'w-[45px]' },
  { name: 'LWT', width: 'w-[26px]' },
  { name: 'MOD', width: 'w-[26px]' },
];

function StatusBar() {
  const [on, setOn] = useState(['OTRACK', 'MOD']);
  const toggle = (name: string) => setOn(on.includes(name) ? on.filter(n => n !== name) : [...on, name]);

  return (
    <footer className="flex h-[21px] items-center border-t border-[#bdbaa6] pt-px pl-1">
      <output className="mr-1 h-[17px] min-w-0 flex-1 truncate border border-[#c5c2ae] px-0.5 leading-4">406.4125, 852.3174, 0.0000</output>
      <div className="flex gap-1">
        {modes.map(m => (
          <button
            key={m.name}
            type="button"
            aria-pressed={on.includes(m.name)}
            onClick={() => toggle(m.name)}
            className={clsx(
              'h-[17px] border pl-px text-left leading-[15px]',
              m.width,
              on.includes(m.name) ? 'border-t-black border-r-white border-b-white border-l-black bg-[#f3f1e6]' : 'border-t-white border-r-[#bdbaa6] border-b-[#bdbaa6] border-l-white'
            )}
          >
            {m.name}
          </button>
        ))}
      </div>
      <button type="button" aria-label="Communication center" className="flex h-[17px] w-[22px] items-center justify-center border border-[#c5c2ae]">
        <Icon className="h-[14px] w-[14px]"><path d="M2 3q0 8 9 8L3 3z" fill="#7fa2cf" stroke={STEEL} /><path d="m7 7 5-4M5 11l-2 4h9l-2-4" stroke={STEEL} strokeWidth="1.600" /><circle cx="13" cy="3" r="1.800" fill="#5b88c4" stroke={STEEL} /></Icon>
      </button>
      <button type="button" aria-label="Status bar menu" className="flex w-[31px] justify-center pr-3">
        <Icon className="h-3 w-3"><path d="M3 7h10l-5 5z" fill="#111" stroke="none" /></Icon>
      </button>
    </footer>
  );
}

export default function App() {
  return (
    <div className="min-h-screen bg-[#e6e6ea]">
      <div className="flex min-h-screen flex-col rounded-t-md border-r-4 border-b-4 border-l-4 border-r-[#0a36c4] border-b-[#0a36c4] border-l-[#0a55ee] bg-[#ece9d8] font-['Liberation_Sans',sans-serif] text-[10px] text-black">
        <TitleBar />
        <MenuBar />
        <TopToolbars />
        <div className="flex flex-1 pb-0.5">
          <SideBar items={modify} />
          <SideBar items={draw} />
          <DrawingArea />
        </div>
        <div className="h-[6px] border-t-2 border-white" />
        <CommandWindow />
        <StatusBar />
      </div>
    </div>
  );
}
